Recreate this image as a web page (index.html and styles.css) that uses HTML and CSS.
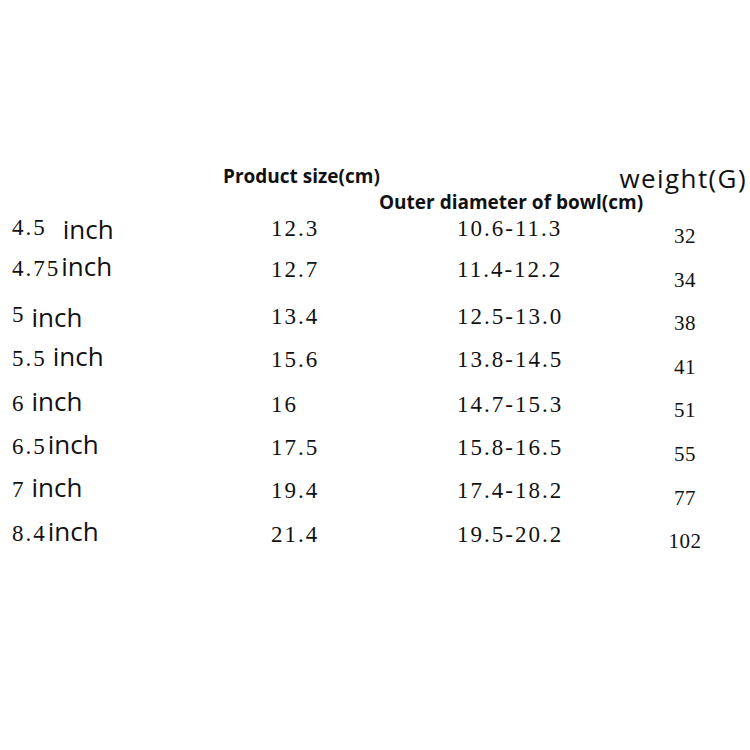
FILE: index.html
```html
<!DOCTYPE html>
<html lang="en">
<head>
<meta charset="utf-8">
<title>Size chart</title>
<link rel="stylesheet" href="styles.css">
</head>
<body>
<main class="sheet">
  <div class="head-top">
    <span class="h-bold">Product size(cm)</span>
    <span class="h-weight">weight(G)</span>
  </div>
  <div class="head-bottom">
    <span class="h-bold">Outer diameter of bowl(cm)</span>
  </div>
  <div class="table">
    <div class="c1"><span class="num">4.5</span><span class="inch wide low">inch</span></div>
    <div class="c2 num">12.3</div>
    <div class="c3 num">10.6-11.3</div>

    <div class="c1"><span class="num">4.75</span><span class="inch none">inch</span></div>
    <div class="c2 num">12.7</div>
    <div class="c3 num">11.4-12.2</div>

    <div class="c1"><span class="num">5</span><span class="inch sp lower">inch</span></div>
    <div class="c2 num">13.4</div>
    <div class="c3 num">12.5-13.0</div>

    <div class="c1"><span class="num">5.5</span><span class="inch sp">inch</span></div>
    <div class="c2 num">15.6</div>
    <div class="c3 num">13.8-14.5</div>

    <div class="c1"><span class="num">6</span><span class="inch sp">inch</span></div>
    <div class="c2 num">16</div>
    <div class="c3 num">14.7-15.3</div>

    <div class="c1"><span class="num">6.5</span><span class="inch tight">inch</span></div>
    <div class="c2 num">17.5</div>
    <div class="c3 num">15.8-16.5</div>

    <div class="c1"><span class="num">7</span><span class="inch sp">inch</span></div>
    <div class="c2 num">19.4</div>
    <div class="c3 num">17.4-18.2</div>

    <div class="c1"><span class="num">8.4</span><span class="inch tight">inch</span></div>
    <div class="c2 num">21.4</div>
    <div class="c3 num">19.5-20.2</div>

    <div class="weights">
      <div class="w">32</div>
      <div class="w">34</div>
      <div class="w">38</div>
      <div class="w">41</div>
      <div class="w">51</div>
      <div class="w">55</div>
      <div class="w">77</div>
      <div class="w">102</div>
    </div>
  </div>
</main>
</body>
</html>
```

FILE: styles.css
```css
html, body {
  margin: 0;
  padding: 0;
  background: #ffffff;
}

body {
  width: 750px;
  height: 750px;
  overflow: hidden;
  color: #111111;
  font-family: "Open Sans", "Noto Sans", sans-serif;
}

.sheet {
  padding-top: 166px;
}

.head-top {
  display: flex;
  align-items: flex-start;
  padding-left: 223px;
  padding-right: 3px;
  height: 22px;
}

.h-bold {
  font-family: "Open Sans", "Noto Sans", sans-serif;
  font-weight: 700;
  font-size: 19px;
  line-height: 20px;
  white-space: nowrap;
}

.h-weight {
  margin-left: auto;
  margin-top: 2px;
  font-size: 26px;
  letter-spacing: 1.4px;
  line-height: 20px;
  font-weight: 400;
  white-space: nowrap;
}

.head-bottom {
  margin-top: 4px;
  padding-left: 379px;
  line-height: 20px;
}

.table {
  display: grid;
  padding-left: 12px;
  grid-template-columns: 259px 186px 198px 60px;
  grid-template-rows: 26px 41px 47px 43px 45px 43px 43px 44px;
  align-items: end;
  line-height: 20px;
}

.num {
  font-family: "Liberation Serif", "Times New Roman", serif;
  font-size: 23px;
  letter-spacing: 2px;
  white-space: nowrap;
}

.c1 {
  grid-column: 1;
  white-space: nowrap;
  line-height: 20px;
}

.c2 {
  grid-column: 2;
}

.c3 {
  grid-column: 3;
}

.inch {
  font-family: "Open Sans", "Noto Sans", sans-serif;
  font-size: 26px;
  line-height: 20px;
}

.inch.wide { margin-left: 16px; }
.inch.none { margin-left: 1px; }
.inch.sp { margin-left: 6px; }
.inch.tight { margin-left: 1px; }
.inch.low { vertical-align: -4px; }
.inch.lower { vertical-align: -5px; }

.weights {
  grid-column: 4;
  grid-row: 1 / span 8;
  align-self: start;
  margin-top: 2px;
  display: flex;
  flex-direction: column;
}

.w {
  height: 43.6px;
  line-height: 43.6px;
  text-align: center;
  font-family: "Liberation Serif", "Times New Roman", serif;
  font-size: 21px;
  letter-spacing: 0.5px;
}
```
